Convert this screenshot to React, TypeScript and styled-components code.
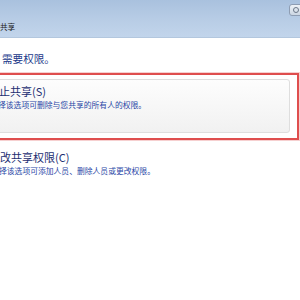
import React from "react";
import styled, { createGlobalStyle } from "styled-components";

const Global = createGlobalStyle`
  html, body { margin: 0; padding: 0; background: #ffffff; }
  body { width: 300px; height: 300px; overflow: hidden; font-family: "Noto Sans CJK SC", "Noto Sans", sans-serif; }
  #root { width: 300px; height: 300px; overflow: hidden; }
`;

const Window = styled.div`
  width: 300px;
  height: 300px;
  display: flex;
  flex-direction: column;
  background: #ffffff;
  overflow: hidden;
`;

const Header = styled.div`
  height: 37px;
  display: flex;
  align-items: flex-start;
  justify-content: space-between;
  background: linear-gradient(to bottom, #a9c1de 0%, #b7cce5 50%, #c2d5eb 100%);
  border-bottom: 1px solid #b3c7de;
`;

const Title = styled.div`
  padding-top: 22px;
  font-size: 7.6px;
  line-height: 10px;
  color: #1c1c1c;
`;

const CornerButton = styled.div`
  margin-top: 4px;
  margin-right: -8px;
  width: 14px;
  height: 10px;
  border: 1px solid #8e9db3;
  border-radius: 3px;
  background: linear-gradient(to bottom, #eef2f7, #cbd6e3);
  display: flex;
  align-items: center;
  padding-left: 3px;
  box-sizing: content-box;
`;

const CornerGlyph = styled.div`
  width: 4px;
  height: 4px;
  border-radius: 50%;
  border: 1px solid #6b7788;
`;

const Content = styled.div`
  display: flex;
  flex-direction: column;
  padding-top: 14px;
`;

const Heading = styled.div`
  font-size: 10.6px;
  line-height: 13px;
  color: #22398a;
  margin-left: 2px;
`;

const Highlight = styled.div`
  margin-top: 8px;
  margin-left: -30px;
  margin-right: 1px;
  border: 2px solid #df4e4e;
  box-shadow: 0 0 0 1px rgba(230, 120, 120, 0.35);
  padding: 4px 7px 5px 10px;
`;

const CommandLink = styled.div<{ $boxed?: boolean }>`
  display: flex;
  flex-direction: column;
  height: 54px;
  box-sizing: border-box;
  padding: 4px 0 0 16px;
  border: 1px solid ${(p) => (p.$boxed ? "#dedede" : "transparent")};
  border-radius: 3px;
  background: ${(p) =>
    p.$boxed ? "linear-gradient(to bottom, #fdfdfd 0%, #f6f6f6 60%, #f1f1f1 100%)" : "transparent"};
`;

const PlainLink = styled(CommandLink)`
  margin-left: -17px;
  margin-top: 5px;
`;

const LinkTitle = styled.div`
  font-size: 11px;
  line-height: 14px;
  color: #1d2f72;
`;

const LinkDesc = styled.div`
  margin-top: 2px;
  margin-left: -1px;
  font-size: 7.8px;
  line-height: 10px;
  color: #2a47a6;
  white-space: nowrap;
`;

export default function App() {
  return (
    <>
      <Global />
      <Window>
        <Header>
          <Title>共享</Title>
          <CornerButton>
            <CornerGlyph />
          </CornerButton>
        </Header>
        <Content>
          <Heading>需要权限。</Heading>
          <Highlight>
            <CommandLink $boxed>
              <LinkTitle>止共享(S)</LinkTitle>
              <LinkDesc>择该选项可删除与您共享的所有人的权限。</LinkDesc>
            </CommandLink>
          </Highlight>
          <PlainLink>
            <LinkTitle>改共享权限(C)</LinkTitle>
            <LinkDesc>择该选项可添加人员、删除人员或更改权限。</LinkDesc>
          </PlainLink>
        </Content>
      </Window>
    </>
  );
}
